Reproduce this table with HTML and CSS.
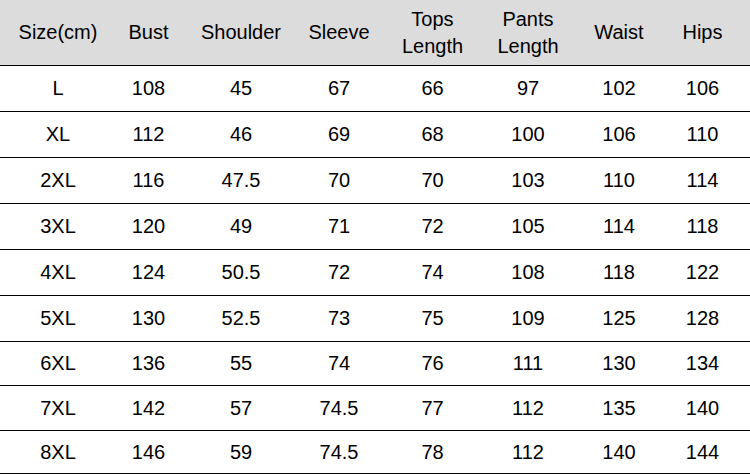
FILE: index.html
```html
<!DOCTYPE html>
<html>
<head>
<meta charset="utf-8">
<link rel="stylesheet" href="styles.css">
</head>
<body>
<div class="table">
  <div class="row head">
    <div class="cell">Size(cm)</div>
    <div class="cell">Bust</div>
    <div class="cell">Shoulder</div>
    <div class="cell">Sleeve</div>
    <div class="cell">Tops<br>Length</div>
    <div class="cell">Pants<br>Length</div>
    <div class="cell">Waist</div>
    <div class="cell">Hips</div>
  </div>
  <div class="row"><div class="cell">L</div><div class="cell">108</div><div class="cell">45</div><div class="cell">67</div><div class="cell">66</div><div class="cell">97</div><div class="cell">102</div><div class="cell">106</div></div>
  <div class="row"><div class="cell">XL</div><div class="cell">112</div><div class="cell">46</div><div class="cell">69</div><div class="cell">68</div><div class="cell">100</div><div class="cell">106</div><div class="cell">110</div></div>
  <div class="row"><div class="cell">2XL</div><div class="cell">116</div><div class="cell">47.5</div><div class="cell">70</div><div class="cell">70</div><div class="cell">103</div><div class="cell">110</div><div class="cell">114</div></div>
  <div class="row"><div class="cell">3XL</div><div class="cell">120</div><div class="cell">49</div><div class="cell">71</div><div class="cell">72</div><div class="cell">105</div><div class="cell">114</div><div class="cell">118</div></div>
  <div class="row"><div class="cell">4XL</div><div class="cell">124</div><div class="cell">50.5</div><div class="cell">72</div><div class="cell">74</div><div class="cell">108</div><div class="cell">118</div><div class="cell">122</div></div>
  <div class="row"><div class="cell">5XL</div><div class="cell">130</div><div class="cell">52.5</div><div class="cell">73</div><div class="cell">75</div><div class="cell">109</div><div class="cell">125</div><div class="cell">128</div></div>
  <div class="row r7"><div class="cell">6XL</div><div class="cell">136</div><div class="cell">55</div><div class="cell">74</div><div class="cell">76</div><div class="cell">111</div><div class="cell">130</div><div class="cell">134</div></div>
  <div class="row r8"><div class="cell">7XL</div><div class="cell">142</div><div class="cell">57</div><div class="cell">74.5</div><div class="cell">77</div><div class="cell">112</div><div class="cell">135</div><div class="cell">140</div></div>
  <div class="row r9"><div class="cell">8XL</div><div class="cell">146</div><div class="cell">59</div><div class="cell">74.5</div><div class="cell">78</div><div class="cell">112</div><div class="cell">140</div><div class="cell">144</div></div>
</div>
</body>
</html>
```
FILE: styles.css
```css
html, body {
  margin: 0;
  padding: 0;
  background: #ffffff;
}
body {
  font-family: "Liberation Sans", Arial, sans-serif;
  font-size: 20px;
  color: #000000;
  width: 750px;
  height: 474px;
  overflow: hidden;
}
.table {
  display: flex;
  flex-direction: column;
}
.row {
  box-sizing: border-box;
  display: grid;
  grid-template-columns: 116px 65px 120px 76px 111px 80px 102px 65px;
  padding-right: 15px;
  height: 46px;
  border-bottom: 1px solid #000000;
}
.row.head {
  height: 66px;
  background: #dcdcdc;
  line-height: 27px;
}
.row.r7 { height: 44px; }
.row.r8 { height: 45px; }
.row.r9 { height: 43px; }
.cell {
  display: flex;
  align-items: center;
  justify-content: center;
  text-align: center;
  white-space: nowrap;
}
```
